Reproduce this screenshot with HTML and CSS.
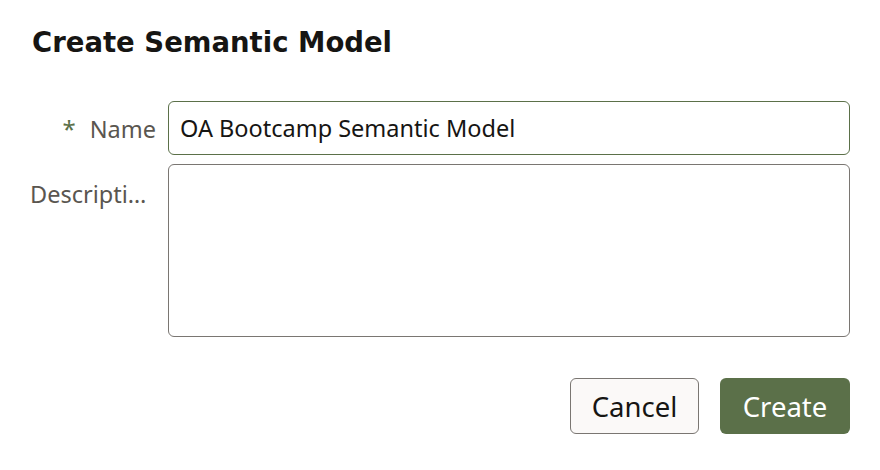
FILE: index.html
```html
<!DOCTYPE html>
<html>
<head>
<meta charset="utf-8">
<link rel="stylesheet" href="styles.css">
</head>
<body>
<div class="dialog">
  <h1 class="title">Create Semantic Model</h1>
  <div class="form">
    <div class="row">
      <label class="label label-mid"><span class="req">*</span>Name</label>
      <div class="input">OA Bootcamp Semantic Model</div>
    </div>
    <div class="row">
      <label class="label label-top">Description</label>
      <div class="textarea"></div>
    </div>
  </div>
  <div class="actions">
    <button class="btn btn-secondary">Cancel</button>
    <button class="btn btn-primary">Create</button>
  </div>
</div>
</body>
</html>
```
FILE: styles.css
```css
* { box-sizing: border-box; }
html, body { margin: 0; padding: 0; background: #ffffff; }
body { font-family: "Noto Sans", "Open Sans", sans-serif; color: #161513; }
.dialog { padding: 24px 30px 0 32px; width: 880px; }
.title { margin: 0; font-family: "DejaVu Sans", "Noto Sans", sans-serif; font-size: 27.5px; line-height: 36px; font-weight: 700; color: #161513; }
.form { margin-top: 41px; display: flex; flex-direction: column; gap: 9px; margin-left: -2px; }
.row { display: flex; gap: 12px; }
.label { width: 126px; flex: none; font-size: 23.5px; color: #5a5650; text-align: right; white-space: nowrap; overflow: hidden; text-overflow: ellipsis; }
.label-mid { align-self: center; }
.label-top { padding-top: 14px; text-align: left; }
.req { color: #5b7049; margin-right: 14px; font-size: 24px; }
.input { flex: 1; height: 54px; border: 1.5px solid #5b7049; border-radius: 6px; padding: 0 11px; display: flex; align-items: center; font-size: 23.5px; color: #161513; }
.textarea { flex: 1; height: 173px; border: 1.5px solid #7a7672; border-radius: 6px; }
.actions { display: flex; justify-content: flex-end; gap: 21px; margin-top: 41px; }
.btn { height: 56px; border-radius: 6px; font-family: "Noto Sans", "Open Sans", sans-serif; font-size: 27.5px; padding: 0; cursor: pointer; }
.btn-secondary { width: 129px; background: #fbf9f8; border: 1.5px solid #7a7672; color: #161513; }
.btn-primary { width: 130px; background: #5b7049; border: none; color: #ffffff; }
```
